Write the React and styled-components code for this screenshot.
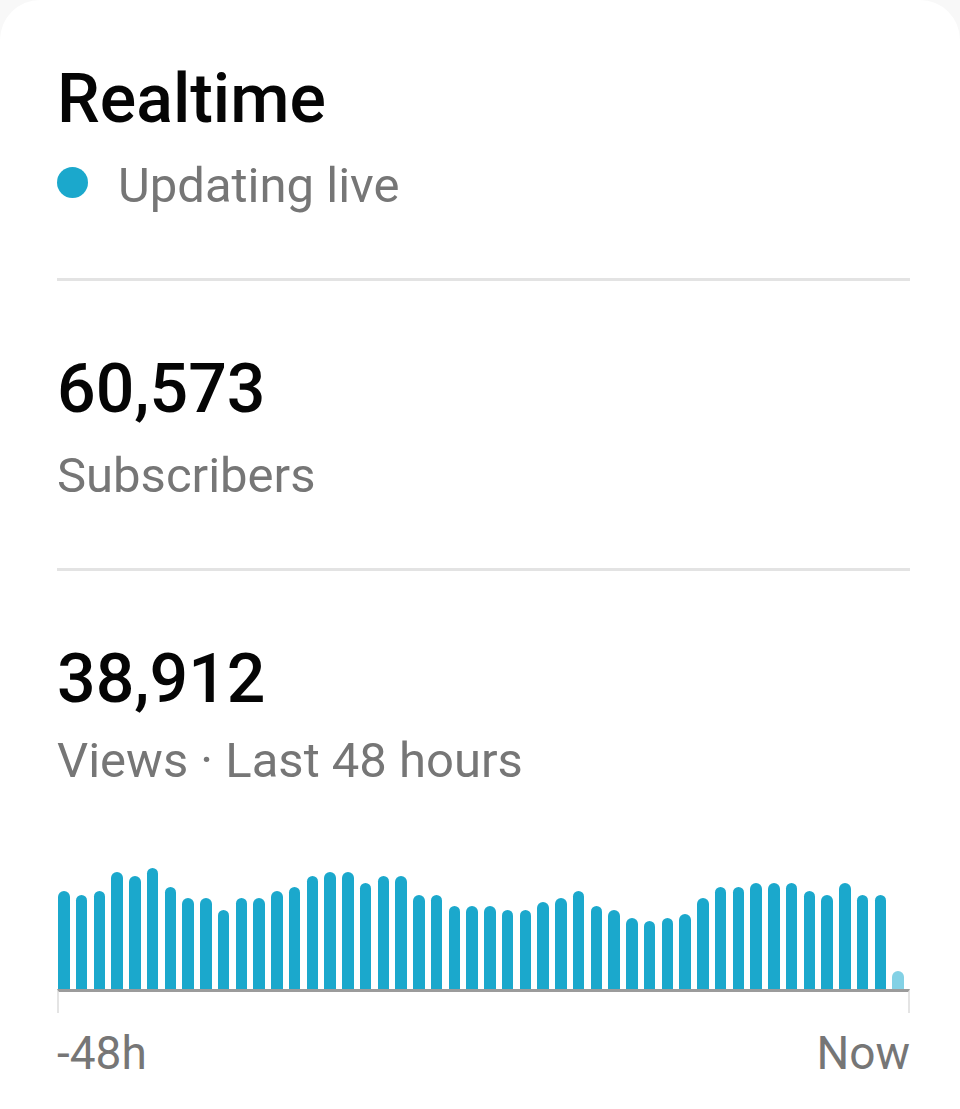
import React from 'react'
import styled, { createGlobalStyle } from 'styled-components'

const GlobalStyle = createGlobalStyle`
  html, body {
    margin: 0;
    padding: 0;
    background: #f8f8f8;
  }
  * {
    box-sizing: border-box;
  }
`

const views = [
  98, 94, 98, 117, 113, 121, 102, 91, 91, 79, 91, 91,
  98, 102, 113, 117, 117, 106, 113, 113, 94, 94, 83, 83,
  83, 79, 79, 87, 91, 98, 83, 79, 71, 68, 71, 75,
  91, 102, 102, 106, 106, 106, 98, 94, 106, 94, 94, 18,
]

const Card = styled.main`
  min-height: 100vh;
  background: #ffffff;
  border-radius: 40px 40px 0 0;
  padding: 59px 50px 0 57px;
  font-family: Roboto, 'Liberation Sans', sans-serif;
  color: #050505;
`

const Heading = styled.h1`
  margin: 0;
  font-size: 68px;
  line-height: 80px;
  font-weight: 500;
`

const Status = styled.div`
  display: flex;
  align-items: center;
  gap: 30px;
  margin-top: 19px;
`

const Dot = styled.span`
  width: 31px;
  height: 31px;
  border-radius: 50%;
  background: #1ba8cc;
  margin-bottom: 7px;
  flex: none;
`

const Caption = styled.div`
  font-size: 49px;
  line-height: 56px;
  color: #767676;
  margin-top: ${p => p.$gap || 0}px;
`

const Divider = styled.hr`
  border: none;
  height: 3px;
  background: #e3e3e3;
  margin: 64px 0 0;
`

const Metric = styled.section`
  padding-top: 68px;
`

const Value = styled.div`
  font-size: 68px;
  line-height: 80px;
  font-weight: 500;
`

const Chart = styled.div`
  margin-top: 0;
`

const Bars = styled.div`
  display: grid;
  grid-template-columns: repeat(48, 1fr);
  align-items: end;
  height: 200px;
  padding-left: 1px;
`

const Bar = styled.div`
  width: 11.5px;
  border-radius: 6px 6px 0 0;
  background: ${p => (p.$current ? '#83d1e5' : '#1ba8cc')};
`

const Axis = styled.div`
  height: 24px;
  border-top: 3px solid #9b9b9b;
  border-left: 2px solid #e4e4e4;
  border-right: 2px solid #e4e4e4;
`

const Labels = styled.div`
  display: flex;
  justify-content: space-between;
  margin-top: 12px;
  font-size: 46px;
  line-height: 56px;
  color: #767676;
`

export default function App() {
  return (
    <>
      <GlobalStyle />
      <Card>
        <Heading>Realtime</Heading>
        <Status>
          <Dot />
          <Caption>Updating live</Caption>
        </Status>
        <Divider />

        <Metric>
          <Value>60,573</Value>
          <Caption $gap={19}>Subscribers</Caption>
        </Metric>
        <Divider />

        <Metric>
          <Value>38,912</Value>
          <Caption $gap={14}>Views · Last 48 hours</Caption>
          <Chart>
            <Bars>
              {views.map((h, i) => (
                <Bar key={i} $current={i === views.length - 1} style={{ height: h }} />
              ))}
            </Bars>
            <Axis />
            <Labels>
              <span>-48h</span>
              <span>Now</span>
            </Labels>
          </Chart>
        </Metric>
      </Card>
    </>
  )
}
